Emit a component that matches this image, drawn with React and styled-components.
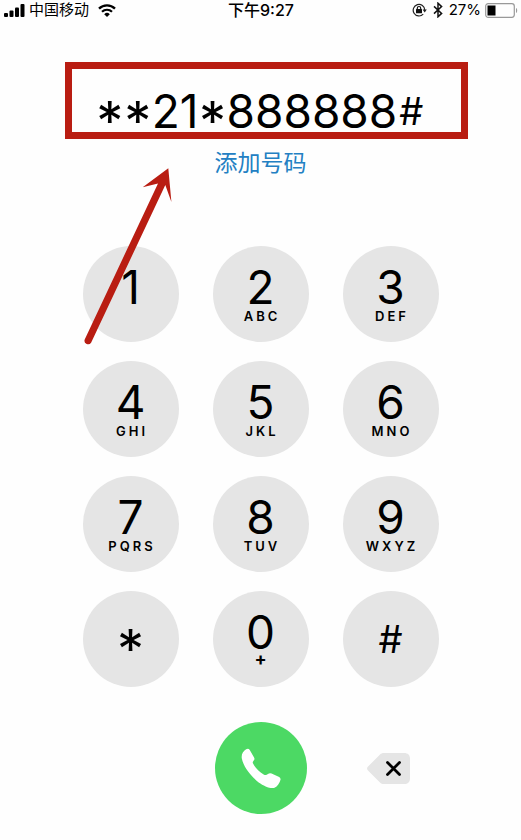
import React, { useState } from "react";
import styled, { createGlobalStyle } from "styled-components";

const KEYS = [
  { digit: "1", letters: "" },
  { digit: "2", letters: "ABC" },
  { digit: "3", letters: "DEF" },
  { digit: "4", letters: "GHI" },
  { digit: "5", letters: "JKL" },
  { digit: "6", letters: "MNO" },
  { digit: "7", letters: "PQRS" },
  { digit: "8", letters: "TUV" },
  { digit: "9", letters: "WXYZ" },
  { digit: "*" },
  { digit: "0", letters: "+" },
  { digit: "#" },
];

const SignalIcon = () => (
  <svg width="21" height="13" viewBox="0 0 21 13" aria-hidden="true">
    <rect x="0" y="9" width="4" height="4" rx="1" />
    <rect x="5.5" y="6.5" width="4" height="6.5" rx="1" />
    <rect x="11" y="3.5" width="4" height="9.5" rx="1" />
    <rect x="16.5" y="0" width="4" height="13" rx="1" />
  </svg>
);

const WifiIcon = () => (
  <svg width="18" height="13" viewBox="0 0 18 13" fill="none" aria-hidden="true">
    <path d="M1 4.6a11.3 11.3 0 0 1 16 0" stroke="#000" strokeWidth="2.3" />
    <path d="M4 7.8a7.1 7.1 0 0 1 10 0" stroke="#000" strokeWidth="2.2" />
    <path d="M6.2 10.2a4 4 0 0 1 5.6 0L9 13z" fill="#000" />
  </svg>
);

const RotationLockIcon = () => (
  <svg width="15" height="14" viewBox="0 0 15 14" fill="none" aria-hidden="true">
    <path d="M11.2 11.2A5.8 5.8 0 1 1 12.8 7" stroke="#222" strokeWidth="1.2" />
    <path d="M10.6 6.6h4.2l-2.1 3z" fill="#222" />
    <rect x="4" y="6" width="6" height="4.2" rx=".5" fill="#111" />
    <path d="M5.3 6.4V5.2a1.7 1.7 0 0 1 3.4 0v1.2" stroke="#111" strokeWidth="1.2" />
  </svg>
);

const BluetoothIcon = () => (
  <svg width="10" height="16" viewBox="0 0 10 16" fill="none" aria-hidden="true">
    <path d="M1 4.4l7.6 7L5 14.8V1.2l3.6 3.4L1 11.6" stroke="#111" strokeWidth="1.5" />
  </svg>
);

const BatteryIcon = () => (
  <svg width="33" height="15" viewBox="0 0 33 15" fill="none" aria-hidden="true">
    <rect x=".7" y=".7" width="28.6" height="13.6" rx="2.5" stroke="#999" strokeWidth="1.2" />
    <rect x="2.5" y="2.5" width="8" height="10" fill="#000" />
    <path d="M31 5v5c1.6-.6 1.6-4.4 0-5z" fill="#999" />
  </svg>
);

const PhoneIcon = () => (
  <svg width="40" height="41" viewBox="16 10 120 124" fill="#fff" aria-hidden="true">
    <path d="M31 14q7-4 11 2l13 23q3 5-1 9l-2 3q-2 3 0 6c6 12 18 24 32 33q5 3 9 1l7-4q4-2 8 0l23 11q5 3 4 8c-3 11-9 20-18 24-12 4-32-5-48-16C43 93 23 66 18 42c-2-12 3-22 13-28z" />
  </svg>
);

const DeleteIcon = () => (
  <svg width="44" height="31" viewBox="0 0 44 31" fill="none" aria-hidden="true">
    <path
      d="M13 1.5C14.2.5 15.2 0 17 0h20c4 0 6 2 6 6v19c0 4-2 6-6 6H17c-1.8 0-2.8-.5-4-1.5L1 17.5c-1.3-1.2-1.3-2.8 0-4z"
      fill="#e5e5e5"
    />
    <path d="M20.5 9.5l12 12m0-12l-12 12" stroke="#000" strokeWidth="2.8" strokeLinecap="round" />
  </svg>
);

const PointerArrow = () => (
  <ArrowDrawing viewBox="82 164 96 184" aria-hidden="true">
    <path
      d="M167.3 168.3L141.7 187.3L157 183.5L83.7 339.5A3.6 3.6 0 0 0 90.2 342.5L164.3 185L170.4 202z"
      fill="#b91d12"
    />
  </ArrowDrawing>
);

const App = () => {
  const [number, setNumber] = useState("**21*888888#");

  return (
    <Screen>
      <GlobalStyle />
      <StatusBar>
        <StatusGroup>
          <StatusPair>
            <SignalIcon />
            <span>中国移动</span>
          </StatusPair>
          <WifiIcon />
        </StatusGroup>
        <Clock>下午9:27</Clock>
        <StatusGroup $end>
          <RotationLockIcon />
          <BluetoothIcon />
          <StatusPair>
            <span>27%</span>
            <BatteryIcon />
          </StatusPair>
        </StatusGroup>
      </StatusBar>

      <Display>
        <DialedNumber>
          {number.split("").map((char, index) =>
            /\d/.test(char) ? char : <Sign key={index} $hash={char === "#"}>{char}</Sign>
          )}
        </DialedNumber>
        <Highlight />
      </Display>
      <AddNumber type="button">添加号码</AddNumber>

      <Keypad>
        {KEYS.map(({ digit, letters }) => (
          <Key key={digit} type="button" onClick={() => setNumber(number + digit)}>
            {letters === undefined ? (
              <Sign $hash={digit === "#"}>{digit}</Sign>
            ) : (
              <>
                <Digit>{digit}</Digit>
                <Letters $plus={letters === "+"}>{letters}</Letters>
              </>
            )}
          </Key>
        ))}
        <PointerArrow />
      </Keypad>

      <Actions>
        <CallButton type="button" aria-label="呼叫">
          <PhoneIcon />
        </CallButton>
        <DeleteButton
          type="button"
          aria-label="删除"
          onClick={() => setNumber(number.slice(0, -1))}
        >
          <DeleteIcon />
        </DeleteButton>
      </Actions>
    </Screen>
  );
};

const GlobalStyle = createGlobalStyle`
  * {
    box-sizing: border-box;
  }
  body {
    margin: 0;
    background: #fefefe;
    color: #000;
    font-family: Inter, "Noto Sans CJK SC", sans-serif;
  }
  button {
    padding: 0;
    border: 0;
    background: none;
    color: inherit;
    font-family: inherit;
    cursor: pointer;
  }
  svg {
    display: block;
    flex: none;
  }
`;

const Screen = styled.main`
  display: flex;
  flex-direction: column;
  align-items: center;
`;

const StatusBar = styled.header`
  display: grid;
  grid-template-columns: 1fr auto 1fr;
  align-items: center;
  width: 100%;
  height: 20px;
  padding: 0 3px 0 4px;
  font-size: 15px;
  line-height: 20px;
`;

const StatusGroup = styled.div`
  display: flex;
  align-items: center;
  justify-content: ${({ $end }) => ($end ? "flex-end" : "flex-start")};
  gap: ${({ $end }) => ($end ? "6px" : "9px")};
  white-space: nowrap;
`;

const StatusPair = styled.div`
  display: flex;
  align-items: center;
  gap: 4px;
`;

const Clock = styled.time`
  font-size: 16px;
  font-weight: 500;
`;

const Display = styled.div`
  position: relative;
  margin-top: 63px;
`;

const DialedNumber = styled.div`
  display: flex;
  height: 56px;
  font-size: 46px;
  line-height: 56px;
`;

/* "*" hangs high in its line, so it is pushed down to the middle of the digits */
const Sign = styled.span`
  min-width: 28px;
  height: 56px;
  padding-top: ${({ $hash }) => ($hash ? "0" : "20px")};
  font-size: ${({ $hash }) => ($hash ? "38px" : "54px")};
  line-height: ${({ $hash }) => ($hash ? "56px" : "36px")};
  text-align: center;
`;

const Highlight = styled.div`
  position: absolute;
  inset: -21px -43px 0 -31px;
  border: 7px solid #b91d12;
  pointer-events: none;
`;

const AddNumber = styled.button`
  margin-top: 10px;
  color: #2380c3;
  font-size: 23px;
  line-height: 28px;
`;

const Keypad = styled.div`
  position: relative;
  display: grid;
  grid-template-columns: repeat(3, 96px);
  gap: 19px 34px;
  margin-top: 69px;
`;

const Key = styled.button`
  display: flex;
  flex-direction: column;
  align-items: center;
  justify-content: center;
  height: 96px;
  border-radius: 50%;
  background: #e5e5e5;
`;

const Digit = styled.span`
  padding-top: 2px;
  font-size: 46px;
  line-height: 42px;
`;

const Letters = styled.span`
  height: 16px;
  padding-left: 3px;
  font-size: ${({ $plus }) => ($plus ? "18px" : "13px")};
  font-weight: ${({ $plus }) => ($plus ? 700 : 600)};
  line-height: ${({ $plus }) => ($plus ? "12px" : "16px")};
  letter-spacing: 3px;
`;

const ArrowDrawing = styled.svg`
  position: absolute;
  top: -82px;
  left: 0;
  width: 96px;
  height: 184px;
  pointer-events: none;
`;

const Actions = styled.div`
  display: grid;
  grid-template-columns: repeat(3, 96px);
  gap: 34px;
  align-items: center;
  margin: 35px 0 26px;
`;

const CallButton = styled.button`
  display: grid;
  grid-column: 2;
  place-items: center;
  justify-self: center;
  width: 92px;
  height: 92px;
  border-radius: 50%;
  background: #4cd964;
`;

const DeleteButton = styled.button`
  justify-self: center;
  width: 48px;
`;

export default App;
